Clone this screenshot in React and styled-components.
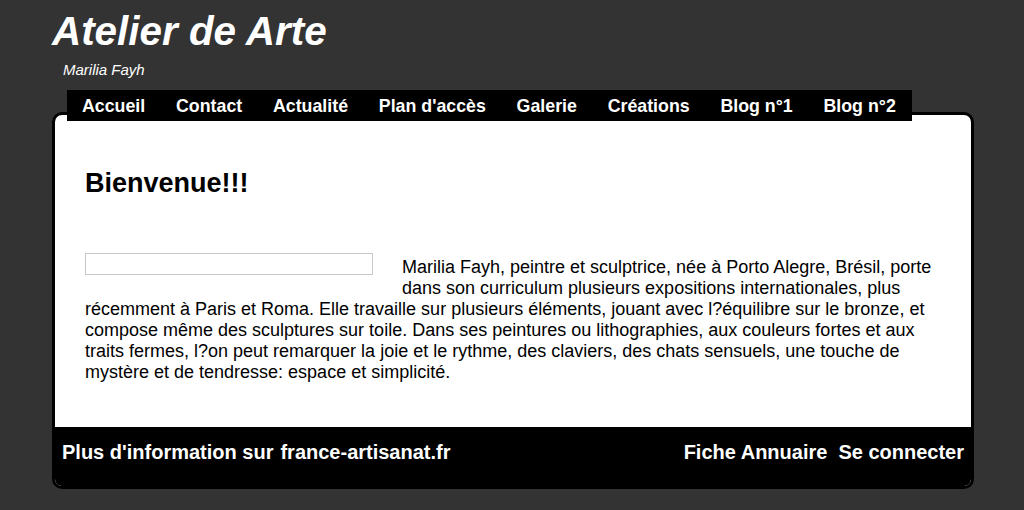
import React from 'react';
import styled, { createGlobalStyle } from 'styled-components';

const GlobalStyle = createGlobalStyle`
  body {
    margin: 0;
    background: #333333;
    font-family: "Liberation Sans", Arial, sans-serif;
  }
`

const menu = ['Accueil', 'Contact', 'Actualité', "Plan d'accès", 'Galerie', 'Créations', 'Blog n°1', 'Blog n°2'];

export default function App() {
  return (
    <>
      <GlobalStyle />
      <Page>
        <Header>
          <Title>Atelier de Arte</Title>
          <Subtitle>Marilia Fayh</Subtitle>
        </Header>

        <Menu>
          {menu.map(item => (
            <MenuItem key={item} href="#">{item}</MenuItem>
          ))}
        </Menu>

        <Box>
          <Content>
            <Heading>Bienvenue!!!</Heading>
            <Text>
              <Picture />
              Marilia Fayh, peintre et sculptrice, née à Porto Alegre, Brésil, porte dans son curriculum plusieurs
              expositions internationales, plus récemment à Paris et Roma. Elle travaille sur plusieurs éléments,
              jouant avec l?équilibre sur le bronze, et compose même des sculptures sur toile. Dans ses peintures ou
              lithographies, aux couleurs fortes et aux traits fermes, l?on peut remarquer la joie et le rythme, des
              claviers, des chats sensuels, une touche de mystère et de tendresse: espace et simplicité.
            </Text>
          </Content>

          <Footer>
            <FooterGroup>
              <FooterLink href="#">Plus d'information sur</FooterLink>
              <FooterLink href="#">france-artisanat.fr</FooterLink>
            </FooterGroup>
            <FooterGroup $gap="11px">
              <FooterLink href="#">Fiche Annuaire</FooterLink>
              <FooterLink href="#">Se connecter</FooterLink>
            </FooterGroup>
          </Footer>
        </Box>
      </Page>
    </>
  )
}

//* Styled Components

const Page = styled.div`
  width: 922px;
  margin-left: 52px;
`

const Header = styled.header`
  padding-top: 8px;
`

const Title = styled.h1`
  margin: 0;
  font-size: 40.4px;
  line-height: 46px;
  font-weight: bold;
  font-style: italic;
  color: #fff;
`

const Subtitle = styled.div`
  margin: 7px 0 0 11px;
  font-size: 15px;
  line-height: 17px;
  font-style: italic;
  color: #fff;
`

const Menu = styled.nav`
  position: relative;
  z-index: 1;
  display: flex;
  width: fit-content;
  height: 31px;
  margin: 12px 0 -9px 15px;
  background: #000;
`

const MenuItem = styled.a`
  padding: 2px 15.75px 0 15px;
  font-size: 17.8px;
  line-height: 29px;
  font-weight: bold;
  color: #fff;
  text-decoration: none;
  white-space: nowrap;
`

const Box = styled.div`
  border: 3px solid #000;
  border-radius: 10px;
  background: #fff;
  overflow: hidden;
`

const Content = styled.main`
  padding: 53px 30px 44px;
`

const Heading = styled.h2`
  margin: 0 0 58px;
  font-size: 27px;
  line-height: 31px;
  font-weight: bold;
  color: #000;
`

const Text = styled.p`
  margin: 0;
  font-size: 18px;
  line-height: 21px;
  color: #000;
`

const Picture = styled.span`
  float: left;
  width: 286px;
  height: 20px;
  margin: -4px 29px 10px 0;
  border: 1px solid #c8c8c8;
`

const Footer = styled.footer`
  display: flex;
  justify-content: space-between;
  height: 59px;
  padding: 14px 7px 0;
  box-sizing: border-box;
  background: #000;
`

const FooterGroup = styled.div`
  display: flex;
  gap: ${props => props.$gap || '7px'};
`

const FooterLink = styled.a`
  font-size: 20px;
  line-height: 23px;
  font-weight: bold;
  color: #fff;
  text-decoration: none;
`
